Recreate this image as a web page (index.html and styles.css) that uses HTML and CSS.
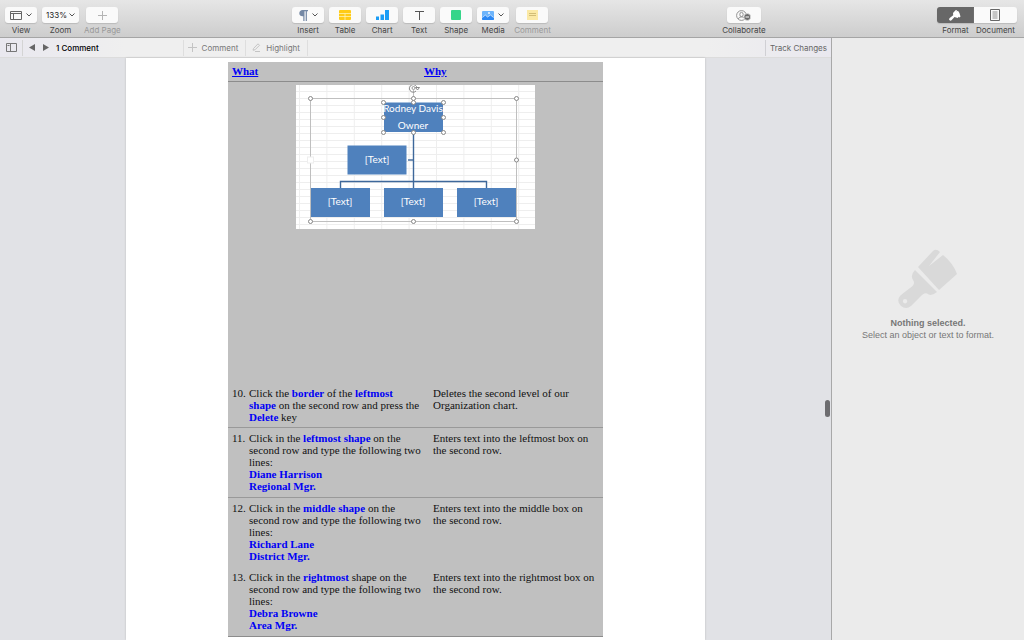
FILE: index.html
```html
<!DOCTYPE html>
<html lang="en">
<head>
    <meta charset="UTF-8">
    <meta name="viewport" content="width=device-width, initial-scale=1.0">
    <title>Organization Chart</title>
    <link rel="stylesheet" href="styles.css">
</head>
<body>
    <!-- Toolbar -->
    <header class="toolbar">
        <div class="tool-group">
            <div class="tool">
                <button type="button" id="view">
                    <svg width="12" height="9" viewBox="0 0 12 9" fill="none" stroke="#666"><path d="M.5.5h11v8H.5zM.5 2.5h11M3.5 2.5v6"/></svg>
                    <svg class="chevron" width="6" height="4" viewBox="0 0 6 4"><path d="M.5.5L3 3 5.500.5"/></svg>
                </button>
                <label for="view">View</label>
            </div>
            <div class="tool">
                <button type="button" id="zoom" class="zoom">133%
                    <svg class="chevron" width="6" height="4" viewBox="0 0 6 4"><path d="M.5.5L3 3 5.500.5"/></svg>
                </button>
                <label for="zoom">Zoom</label>
            </div>
            <div class="tool disabled">
                <button type="button" id="addPage" disabled>
                    <svg width="9" height="9" viewBox="0 0 9 9" stroke="#b4b4b4"><path d="M4.500 0v9M0 4.500h9"/></svg>
                </button>
                <label for="addPage">Add Page</label>
            </div>
        </div>

        <div class="tool-group">
            <div class="tool">
                <button type="button" id="insert">
                    <svg width="9" height="11" viewBox="0 0 9 11" fill="#7488a5"><path d="M3.500 0H9v1.200H7.900V11H6.700V1.200H5.500V11H4.300V6.200C1.700 6.500.3 5 .3 3.200S1.700 0 3.500 0z"/></svg>
                    <svg class="chevron" width="6" height="4" viewBox="0 0 6 4"><path d="M.5.5L3 3 5.500.5"/></svg>
                </button>
                <label for="insert">Insert</label>
            </div>
            <div class="tool">
                <button type="button" id="table">
                    <svg width="12" height="10" viewBox="0 0 12 10"><rect width="12" height="10" rx="1" fill="#ffcb17"/><path d="M0 3.500h12M0 6.500h12M6 3.500V10" stroke="#fff2b5" stroke-width=".8"/></svg>
                </button>
                <label for="table">Table</label>
            </div>
            <div class="tool">
                <button type="button" id="chart">
                    <svg width="13" height="10" viewBox="0 0 13 10" fill="#1b9df5"><path d="M0 6.500h3V10H0zM4.500 4.500h3.500V10H4.500zM9 0h4v10H9z"/></svg>
                </button>
                <label for="chart">Chart</label>
            </div>
            <div class="tool">
                <button type="button" id="text">
                    <svg width="9" height="9" viewBox="0 0 9 9" fill="none" stroke="#555"><path d="M0 .5h9M4.500.5V9"/></svg>
                </button>
                <label for="text">Text</label>
            </div>
            <div class="tool">
                <button type="button" id="shape">
                    <svg width="10" height="10" viewBox="0 0 10 10"><rect width="10" height="10" rx="1" fill="#36d58a"/></svg>
                </button>
                <label for="shape">Shape</label>
            </div>
            <div class="tool">
                <button type="button" id="media">
                    <svg width="12" height="9" viewBox="0 0 12 9"><rect width="12" height="9" rx="1" fill="#6db4fb"/><path d="M0 7l3-3 2.500 2L8.500 4 12 7v1a1 1 0 0 1-1 1H1a1 1 0 0 1-1-1z" fill="#2b87f3"/><path d="M.5 6.500L3.300 4 5.500 6l3-2 3 2.500" fill="none" stroke="#fff" stroke-width=".6"/><circle cx="7" cy="2" r=".9" fill="#fff"/></svg>
                    <svg class="chevron" width="6" height="4" viewBox="0 0 6 4"><path d="M.5.5L3 3 5.500.5"/></svg>
                </button>
                <label for="media">Media</label>
            </div>
            <div class="tool disabled">
                <button type="button" id="comment" disabled>
                    <svg width="11" height="10" viewBox="0 0 11 10"><rect width="11" height="10" fill="#fbe9a5"/><path d="M2 3.500h7M2 5.500h7" stroke="#d2bd76"/></svg>
                </button>
                <label for="comment">Comment</label>
            </div>
        </div>

        <div class="tool-group">
            <div class="tool">
                <button type="button" id="collaborate">
                    <svg width="15" height="11" viewBox="0 0 15 11"><g fill="none" stroke="#888" stroke-width=".9"><circle cx="5.500" cy="5.500" r="4.900"/><ellipse cx="5.500" cy="4.500" rx="1.700" ry="2.200"/><path d="M2.300 9q.5-2 3.200-2.200T8.700 9"/></g><circle cx="11.300" cy="7" r="3.400" fill="#6b6b6b" stroke="#f8f8f8" stroke-width=".6"/><path d="M9.500 7h3.600" stroke="#fff"/></svg>
                </button>
                <label for="collaborate">Collaborate</label>
            </div>
        </div>

        <div class="tool-group segmented">
            <div class="tool">
                <button type="button" id="format" class="active">
                    <svg width="12" height="11" viewBox="0 0 12 11" fill="#fff"><path d="M4 3L6.500.2 8 0 7.500 1.500 9 .8Q11 3 11.500 6.500L10.500 7.500 9.500 6.800 9 8 7 7.500 5.500 7 2.500 10.300Q1.200 11.200.4 10T1 7.800L4.200 5.300z"/></svg>
                </button>
                <label for="format">Format</label>
            </div>
            <div class="tool">
                <button type="button" id="document">
                    <svg width="10" height="12" viewBox="0 0 10 12" fill="none" stroke="#666"><path d="M.5.5h9v11h-9z"/><path d="M2.500 3h5M2.500 5h5M2.500 7h5M2.500 9h5" stroke-width=".7"/></svg>
                </button>
                <label for="document">Document</label>
            </div>
        </div>
    </header>

    <div class="workspace">
        <div class="editor">
            <!-- Review bar -->
            <div class="review-bar">
                <button type="button" class="pane" aria-label="Comments pane">
                    <svg width="11" height="9" viewBox="0 0 11 9" fill="none" stroke="#777"><path d="M.5.5h10v8H.5zM4.500.5v8M1.500 2.500h2"/></svg>
                </button>
                <button type="button" class="arrow" aria-label="Previous comment"><svg width="6" height="7" viewBox="0 0 6 7"><path d="M6 0v7L0 3.500z" fill="#666"/></svg></button>
                <button type="button" class="arrow" aria-label="Next comment"><svg width="6" height="7" viewBox="0 0 6 7"><path d="M0 0v7l6-3.500z" fill="#666"/></svg></button>
                <span class="count">1 Comment</span>
                <div class="review-actions">
                    <button type="button"><svg width="9" height="9" viewBox="0 0 9 9" stroke="#c4c4c4"><path d="M4.500 0v9M0 4.500h9"/></svg>Comment</button>
                    <button type="button"><svg width="9" height="9" viewBox="0 0 9 9" fill="none" stroke="#c4c4c4"><path d="M1.500 5.500L6 .8 7.500 2.300 3 6.800 1 7.200zM3 8.500h5"/></svg>Highlight</button>
                </div>
                <button type="button" class="track">Track Changes</button>
            </div>

            <!-- Document page -->
            <main class="canvas">
                <div class="page">
                    <table class="steps">
                        <thead>
                            <tr><th>What</th><th>Why</th></tr>
                        </thead>
                        <tbody>
                            <tr class="figure">
                                <td colspan="2">
                                    <svg class="org-chart" width="239" height="144" viewBox="0 0 239 144">
                                        <defs>
                                            <pattern id="grid" width="27.400" height="7" patternUnits="userSpaceOnUse" x="3" y="6">
                                                <path d="M.5 0v7M0 .5h27.400" stroke="#eee" fill="none"/>
                                            </pattern>
                                        </defs>
                                        <rect width="239" height="144" fill="#fff"/>
                                        <rect width="239" height="144" fill="url(#grid)"/>
                                        <path d="M14.500 13.500h206v123h-206zM117.500 5v8" fill="none" stroke="#bfbfbf"/>
                                        <path d="M117.500 47v56M44.500 103v-6.500h146v6.500" fill="none" stroke="#3e689b" stroke-width="1.400"/>
                                        <path d="M112 75h5" stroke="#3e689b" stroke-width="1.400"/>
                                        <g class="box">
                                            <rect x="88" y="17.500" width="59" height="29.500"/>
                                            <rect x="51.500" y="60.500" width="59" height="29"/>
                                            <rect x="15" y="103" width="59" height="29"/>
                                            <rect x="88" y="103" width="59" height="29"/>
                                            <rect x="161" y="103" width="59" height="29"/>
                                        </g>
                                        <g class="box-text">
                                            <text x="117" y="27">Rodney Davis</text>
                                            <text x="117" y="44">Owner</text>
                                            <text x="81" y="78">[Text]</text>
                                            <text x="44" y="120">[Text]</text>
                                            <text x="117" y="120">[Text]</text>
                                            <text x="190" y="120">[Text]</text>
                                        </g>
                                        <g class="handle">
                                            <circle cx="14.500" cy="13.500" r="2"/><circle cx="117.500" cy="13.500" r="2"/><circle cx="220.500" cy="13.500" r="2"/>
                                            <circle cx="220.500" cy="75" r="2"/>
                                            <circle cx="14.500" cy="136.500" r="2"/><circle cx="117.500" cy="136.500" r="2"/><circle cx="220.500" cy="136.500" r="2"/>
                                            <circle cx="87.500" cy="17.500" r="2"/><circle cx="117.500" cy="17.500" r="2"/><circle cx="147.500" cy="17.500" r="2"/>
                                            <circle cx="87.500" cy="32.500" r="2"/><circle cx="147.500" cy="32.500" r="2"/>
                                            <circle cx="87.500" cy="47.500" r="2"/><circle cx="117.500" cy="47.500" r="2"/><circle cx="147.500" cy="47.500" r="2"/>
                                        </g>
                                        <rect x="11.500" y="72" width="6" height="6" fill="#fff" stroke="#eee"/>
                                        <path d="M121 3a3.800 3.800 0 1 0-1 3M119.500 2.500h4L121.500 5z" fill="none" stroke="#888"/>
                                        <circle cx="117.500" cy="3" r="1.500" fill="none" stroke="#999"/>
                                    </svg>
                                </td>
                            </tr>
                            <tr>
                                <td><div class="step"><span>10.</span><p>Click the <b>border</b> of the <b>leftmost<br>shape</b> on the second row and press the<br><b>Delete</b> key</p></div></td>
                                <td>Deletes the second level of our<br>Organization chart.</td>
                            </tr>
                            <tr class="line">
                                <td><div class="step"><span>11.</span><p>Click in the <b>leftmost shape</b> on the<br>second row and type the following two<br>lines:<br><b>Diane Harrison<br>Regional Mgr.</b></p></div></td>
                                <td>Enters text into the leftmost box on<br>the second row.</td>
                            </tr>
                            <tr class="line">
                                <td><div class="step"><span>12.</span><p>Click in the <b>middle shape</b> on the<br>second row and type the following two<br>lines:<br><b>Richard Lane<br>District Mgr.</b></p></div></td>
                                <td>Enters text into the middle box on<br>the second row.</td>
                            </tr>
                            <tr class="last">
                                <td><div class="step"><span>13.</span><p>Click in the <b>rightmost</b> shape on the<br>second row and type the following two<br>lines:<br><b>Debra Browne<br>Area Mgr.</b></p></div></td>
                                <td>Enters text into the rightmost box on<br>the second row.</td>
                            </tr>
                        </tbody>
                    </table>
                </div>
                <div class="scroll-thumb"></div>
            </main>
        </div>

        <!-- Format sidebar -->
        <aside class="sidebar">
            <svg width="60" height="60" viewBox="0 0 60 60" fill="#d9d9d9">
                <path d="M20 18L35 2Q38-1 42 3L31 17 45 6Q55 14 59 25L41 41z"/>
                <path fill-rule="evenodd" d="M17 21L39 43Q33 48 29 44.500 26 43 22 48L13 57Q8 61 3 57 -2 52 2 47 4 45 12 39 18 35 15 31 12 26 17 21zM7 50a2.200 2.200 0 1 0 .1 4.400A2.200 2.200 0 0 0 7 50z"/>
            </svg>
            <h2>Nothing selected.</h2>
            <p>Select an object or text to format.</p>
        </aside>
    </div>
</body>
</html>
```
FILE: styles.css
```css
* {
    box-sizing: border-box;
}

body {
    margin: 0;
    height: 100vh;
    display: flex;
    flex-direction: column;
    overflow: hidden;
    font-family: Inter, "Liberation Sans", sans-serif;
    font-size: 8px;
    color: #444;
}

button {
    display: flex;
    align-items: center;
    justify-content: center;
    margin: 0;
    padding: 0;
    border: none;
    background: none;
    font: inherit;
    color: inherit;
}

svg {
    display: block;
    flex: none;
}

/* Toolbar */
.toolbar {
    display: flex;
    justify-content: space-between;
    height: 38px;
    padding: 7px 7px 0 5px;
    border-bottom: 1px solid #a5a5a5;
    background: linear-gradient(#e6e6e6, #cdcdcd);
}

.tool-group {
    display: flex;
    gap: 5px;
}

.tool {
    display: flex;
    flex-direction: column;
    align-items: center;
    gap: 2px;
    line-height: 10px;
}

.tool button {
    width: 32px;
    height: 16px;
    gap: 4px;
    border-radius: 3px;
    background: #fafafa;
    box-shadow: 0 1px 1px #bbb;
}

.tool .zoom {
    width: 37px;
    gap: 2px;
    color: #222;
}

.tool #collaborate {
    width: 34px;
}

.disabled label {
    color: #999;
}

.chevron {
    fill: none;
    stroke: #555;
}

.segmented {
    gap: 0;
}

.segmented .tool button {
    width: 43px;
    border-radius: 0 3px 3px 0;
}

.segmented .tool .active {
    width: 37px;
    border-radius: 3px 0 0 3px;
    background: #676767;
}

/* Editor and sidebar */
.workspace {
    flex: 1;
    display: flex;
    min-height: 0;
}

.editor {
    flex: 1;
    display: flex;
    flex-direction: column;
    min-width: 0;
}

.review-bar {
    display: flex;
    align-items: center;
    height: 20px;
    border-bottom: 1px solid #dcdcdc;
    background: linear-gradient(90deg, #e9e8ef, #efefef 15%, #efefef 85%, #e9e8ef);
    color: #777;
}

.review-bar button {
    height: 16px;
}

.review-bar .pane {
    width: 23px;
    border-right: 1px solid #d4d4d4;
}

.review-bar .arrow {
    width: 14px;
    margin-left: 2px;
    margin-right: -2px;
}

.count {
    margin-left: 5px;
    color: #000;
    font-weight: 500;
}

.review-actions {
    display: flex;
    margin-left: 84px;
    border-left: 1px solid #dedede;
}

.review-actions button {
    gap: 5px;
    padding: 0 7px 0 4px;
    border-right: 1px solid #dedede;
}

.review-actions button:last-child {
    padding-left: 6px;
}

.track {
    margin-left: auto;
    padding: 0 4px;
    border-left: 1px solid #d0d0d4;
    color: #666;
}

.canvas {
    flex: 1;
    display: flex;
    min-height: 0;
    position: relative;
    background: #e1e2e6;
}

.page {
    flex: 1;
    margin: 0 126px;
    padding: 4px 102px 0;
    background: #fff;
    box-shadow: 0 0 2px #bbb;
    overflow: hidden;
}

.scroll-thumb {
    position: absolute;
    right: 1px;
    top: 342px;
    width: 5px;
    height: 17px;
    border-radius: 3px;
    background: #6d6d70;
}

/* Lesson table */
.steps {
    width: 100%;
    table-layout: fixed;
    border-collapse: collapse;
    background: #c0c0c0;
    font-family: "Liberation Serif", serif;
    font-size: 11px;
    line-height: 12px;
    color: #111;
}

.steps th {
    padding: 3px 1px 4px;
    border-bottom: 1px solid #8c8c8c;
    text-align: left;
    text-decoration: underline;
    color: #0000f5;
}

.steps th:first-child {
    width: 52%;
    padding-left: 4px;
}

.steps td {
    padding: 4px 0 4px 10px;
    vertical-align: top;
    white-space: nowrap;
}

.steps td:first-child {
    padding-left: 4px;
}

.steps .figure td {
    height: 301px;
    padding: 3px 0;
}

.steps .line td {
    border-top: 1px solid #999;
    padding-bottom: 5px;
}

.steps .last td {
    border-bottom: 1px solid #8c8c8c;
    padding-bottom: 5px;
}

.steps b {
    color: #0000f5;
}

.step {
    display: flex;
}

.step span {
    width: 17px;
}

.step p {
    margin: 0;
}

.org-chart {
    margin: 0 auto;
}

.box {
    fill: #4f81bd;
}

.box-text {
    fill: #fff;
    font-family: Lato, sans-serif;
    font-size: 10px;
    text-anchor: middle;
}

.handle {
    fill: #fff;
    stroke: #888;
}

.sidebar {
    display: flex;
    flex-direction: column;
    align-items: center;
    justify-content: center;
    width: 193px;
    padding-bottom: 89px;
    border-left: 1px solid #a8a8a8;
    background: #ebebeb;
    font-family: "Liberation Sans", sans-serif;
    font-size: 9px;
    line-height: 12px;
    color: #777;
}

.sidebar h2 {
    margin: 8px 0 0;
    font-size: 9px;
}

.sidebar p {
    margin: 0;
}
```
